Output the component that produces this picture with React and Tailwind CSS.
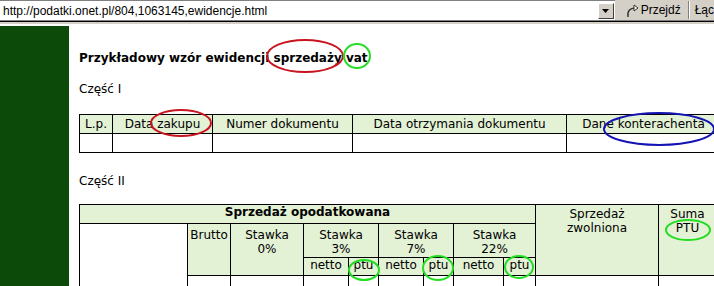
import React from 'react';

const hd = 'bg-[#e3f1d5]';
const cell = 'border border-black p-0 text-center align-top';

const Ellipses = () => (
  <svg className="absolute top-0 left-0 pointer-events-none" width="714" height="286" viewBox="0 0 714 286" fill="none">
    <ellipse cx="305" cy="56" rx="38" ry="16" stroke="#c8141e" strokeWidth="2" />
    <ellipse cx="357" cy="56" rx="13" ry="12" stroke="#22dd22" strokeWidth="2" />
    <ellipse cx="181" cy="123" rx="30" ry="13" stroke="#c8141e" strokeWidth="2" />
    <ellipse cx="659" cy="129" rx="55" ry="16" stroke="#1414b4" strokeWidth="2" />
    <ellipse cx="364" cy="270" rx="15" ry="10" stroke="#22dd22" strokeWidth="2" />
    <ellipse cx="438" cy="268" rx="15" ry="12" stroke="#22dd22" strokeWidth="2" />
    <ellipse cx="519" cy="267" rx="14" ry="11" stroke="#22dd22" strokeWidth="2" />
    <ellipse cx="688" cy="230" rx="22" ry="10" stroke="#22dd22" strokeWidth="2" />
  </svg>
);

const AddressBar = () => (
  <div className="h-[26px] bg-[#d4d0c8] flex flex-col font-['Liberation_Sans',Arial,sans-serif] text-[12px] text-black">
    <div className="h-[20px] flex">
      <div className="w-[619px] bg-white border-t border-[#808080] flex items-center justify-between">
        <span className="pl-[3px] leading-[14px]">http://podatki.onet.pl/804,1063145,ewidencje.html</span>
        <div className="w-[16px] h-[16px] mr-[1px] bg-[#d4d0c8] border border-t-white border-l-white border-r-[#404040] border-b-[#404040] flex items-center justify-center">
          <svg width="7" height="4" viewBox="0 0 7 4"><path d="M0 0h7L3.5 4z" fill="#000" /></svg>
        </div>
      </div>
      <div className="flex-1 flex items-center">
        <div className="flex items-center ml-[11px] gap-[1px]">
          <svg width="14" height="15" viewBox="0 0 14 15" fill="none">
            <path d="M2 14 C1 8 4 5 9 5" stroke="#333" strokeWidth="1.4" />
            <path d="M8 2 L12 5 L8 8 Z" fill="#fff" stroke="#333" strokeWidth="1" />
          </svg>
          <span>Przejdź</span>
        </div>
        <div className="ml-[7px] w-[2px] h-[18px] border-l border-[#808080] border-r border-r-white" />
        <span className="ml-[5px]">Łąc</span>
      </div>
    </div>
    <div className="h-[1px] bg-[#808080]" />
    <div className="h-[1px] bg-black" />
    <div className="h-[2px] bg-[#d4d0c8]" />
    <div className="h-[2px] bg-white" />
  </div>
);

const App = () => {
  return (
    <div className="relative w-[714px] h-[286px] overflow-hidden bg-white">
      <AddressBar />
      <div className="flex h-[260px]">
        <div className="w-[69px] shrink-0 bg-[#0c4a0a]" />
        <div className="pl-[10px] pt-[25px] text-[12px] text-black font-['DejaVu_Sans',Verdana,sans-serif]">
          <h1 className="font-bold text-[12px] leading-[15px]">Przykładowy wzór ewidencji sprzedaży vat</h1>
          <p className="mt-[16px] leading-[15px]">Część I</p>

          <table className="mt-[17px] border-collapse table-fixed w-[641px]">
            <colgroup>
              <col className="w-[33px]" />
              <col className="w-[100px]" />
              <col className="w-[140px]" />
              <col className="w-[214px]" />
              <col className="w-[154px]" />
            </colgroup>
            <tbody>
              <tr className={`${hd} h-[18px]`}>
                <td className={`${cell} align-middle whitespace-nowrap`}>L.p.</td>
                <td className={`${cell} align-middle whitespace-nowrap`}>Data zakupu</td>
                <td className={`${cell} align-middle whitespace-nowrap`}>Numer dokumentu</td>
                <td className={`${cell} align-middle whitespace-nowrap`}>Data otrzymania dokumentu</td>
                <td className={`${cell} align-middle whitespace-nowrap`}>Dane konterachenta</td>
              </tr>
              <tr className="h-[19px]">
                <td className={cell}></td>
                <td className={cell}></td>
                <td className={cell}></td>
                <td className={cell}></td>
                <td className={cell}></td>
              </tr>
            </tbody>
          </table>

          <p className="mt-[21px] leading-[15px]">Część II</p>

          <table className="mt-[15px] border-collapse table-fixed w-[637px] leading-[14px]">
            <colgroup>
              <col className="w-[108px]" />
              <col className="w-[43px]" />
              <col className="w-[73px]" />
              <col className="w-[45px]" />
              <col className="w-[30px]" />
              <col className="w-[45px]" />
              <col className="w-[30px]" />
              <col className="w-[50px]" />
              <col className="w-[32px]" />
              <col className="w-[123px]" />
              <col className="w-[58px]" />
            </colgroup>
            <tbody>
              <tr className={`${hd} h-[19px]`}>
                <td colSpan={9} className={`${cell} align-middle font-bold`}>Sprzedaż opodatkowana</td>
                <td rowSpan={3} className={`${cell} pt-[2px]`}>Sprzedaż<br />zwolniona</td>
                <td rowSpan={3} className={`${cell} pt-[2px]`}>Suma<br />PTU</td>
              </tr>
              <tr className="h-[34px]">
                <td rowSpan={3} className={`${cell} bg-white`}></td>
                <td rowSpan={2} className={`${cell} ${hd} pt-[4px]`}>Brutto</td>
                <td rowSpan={2} className={`${cell} ${hd} pt-[4px]`}>Stawka<br />0%</td>
                <td colSpan={2} className={`${cell} ${hd} pt-[4px]`}>Stawka<br />3%</td>
                <td colSpan={2} className={`${cell} ${hd} pt-[4px]`}>Stawka<br />7%</td>
                <td colSpan={2} className={`${cell} ${hd} pt-[4px]`}>Stawka<br />22%</td>
              </tr>
              <tr className={`${hd} h-[18px]`}>
                <td className={`${cell} align-middle`}>netto</td>
                <td className={`${cell} align-middle`}>ptu</td>
                <td className={`${cell} align-middle`}>netto</td>
                <td className={`${cell} align-middle`}>ptu</td>
                <td className={`${cell} align-middle`}>netto</td>
                <td className={`${cell} align-middle`}>ptu</td>
              </tr>
              <tr className="h-[19px]">
                <td className={cell}></td>
                <td className={cell}></td>
                <td className={cell}></td>
                <td className={cell}></td>
                <td className={cell}></td>
                <td className={cell}></td>
                <td className={cell}></td>
                <td className={cell}></td>
                <td className={cell}></td>
                <td className={cell}></td>
                <td className={cell}></td>
              </tr>
            </tbody>
          </table>
        </div>
      </div>
      <Ellipses />
    </div>
  );
};

export default App;
